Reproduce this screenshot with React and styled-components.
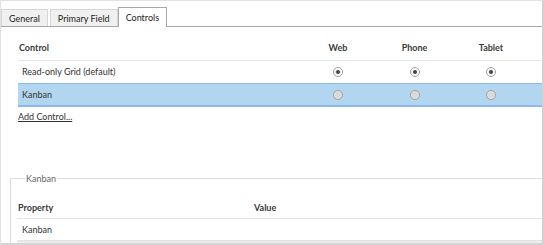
import React from 'react';
import styled, { createGlobalStyle } from 'styled-components';

const GlobalStyle = createGlobalStyle`
  html, body {
    margin: 0;
    padding: 0;
    background: #fff;
  }
  body {
    font-family: Lato, 'Noto Sans', sans-serif;
    font-size: 9px;
    color: #333;
  }
`;

const Frame = styled.div`
  box-sizing: border-box;
  width: 544px;
  height: 245px;
  border-top: 1px solid #e2e2e2;
  border-left: 1px solid #e2e2e2;
  border-right: 2px solid #d2d2d2;
  border-bottom: 2px solid #d4d4d4;
  overflow: hidden;
  display: flex;
  flex-direction: column;
`;

const TabStrip = styled.div`
  box-sizing: border-box;
  display: flex;
  align-items: flex-end;
  height: 26px;
  border-bottom: 1px solid #a8a8a8;
`;

const Tab = styled.div`
  box-sizing: border-box;
  height: ${(p) => (p.$active ? '20px' : '17px')};
  margin-bottom: ${(p) => (p.$active ? '-1px' : '0')};
  padding: 0 7px ${(p) => (p.$active ? 1 : 0)}px;
  display: flex;
  align-items: center;
  background: ${(p) => (p.$active ? '#fff' : '#f0f0f0')};
  border: 1px solid ${(p) => (p.$active ? '#a8a8a8' : '#d6d6d6')};
  border-bottom: 0;
  margin-right: ${(p) => (p.$gap ? 2 : 0)}px;
  color: #222;
`;

const Controls = styled.div`
  padding: 12px 0 0 17px;
`;

const Grid = styled.div`
  display: grid;
  grid-template-columns: 282px 76px 77px 76px 1fr;
`;

const Row = styled.div`
  display: contents;
`;

const HeadCell = styled.div`
  box-sizing: border-box;
  height: 22px;
  padding: 0 0 5px ${(p) => (p.$center ? 0 : 1)}px;
  display: flex;
  align-items: center;
  justify-content: ${(p) => (p.$center ? 'center' : 'flex-start')};
  font-weight: 700;
  color: #3a3a3a;
  border-bottom: 1px solid #e6e6e6;
`;

const Cell = styled.div`
  box-sizing: border-box;
  height: ${(p) => (p.$selected ? 24 : 21)}px;
  margin-top: ${(p) => (p.$selected ? 1 : 0)}px;
  display: flex;
  align-items: center;
  justify-content: ${(p) => (p.$center ? 'center' : 'flex-start')};
  padding-left: ${(p) => (p.$center ? 0 : 4)}px;
  color: #333;
  background: ${(p) => (p.$selected ? '#b2d5f0' : 'transparent')};
  border-top: ${(p) => (p.$selected ? '1px solid #8db6ee' : 'none')};
  border-bottom: ${(p) => (p.$selected ? '2px solid #8db6ee' : 'none')};
`;

const Radio = styled.span`
  box-sizing: border-box;
  width: 10px;
  height: 10px;
  border-radius: 50%;
  border: 1px solid #a0a0a0;
  background: ${(p) => (p.$checked ? '#f4f4f4' : '#d9d9d9')};
  box-shadow: inset 0 0 0 1px ${(p) => (p.$checked ? '#fff' : '#e4e4e4')};
  display: flex;
  align-items: center;
  justify-content: center;
  &::after {
    content: '';
    display: ${(p) => (p.$checked ? 'block' : 'none')};
    width: 4px;
    height: 4px;
    border-radius: 50%;
    background: #444;
  }
`;

const AddLink = styled.a`
  display: inline-block;
  margin-top: 4px;
  color: #333;
  text-decoration: underline;
  text-underline-offset: 1px;
  cursor: pointer;
`;

const Fieldset = styled.fieldset`
  margin: 51px 0 0 9px;
  padding: 13px 0 0 6px;
  border: 1px solid #dedede;
  border-right: none;
  border-bottom: none;
  flex: 1;
  min-height: 0;
`;

const Legend = styled.legend`
  padding: 0 1px;
  margin-left: 8px;
  color: #666;
`;

const PropGrid = styled.div`
  display: grid;
  grid-template-columns: 236px 1fr;
`;

const PropCell = styled.div`
  box-sizing: border-box;
  height: 22px;
  display: flex;
  align-items: center;
  padding-left: ${(p) => (p.$head ? 1 : 5)}px;
  font-weight: ${(p) => (p.$head ? 700 : 400)};
  color: ${(p) => (p.$head ? '#3a3a3a' : '#333')};
  border-bottom: 1px solid #e4e4e4;
`;

const NextRow = styled.div`
  grid-column: 1 / -1;
  height: 3px;
  background: #ededed;
`;

const controls = [
  { name: 'Read-only Grid (default)', checked: true },
  { name: 'Kanban', checked: false, selected: true },
];

export default function App() {
  return (
    <>
      <GlobalStyle />
      <Frame>
        <TabStrip>
          <Tab $gap>General</Tab>
          <Tab>Primary Field</Tab>
          <Tab $active>Controls</Tab>
        </TabStrip>
        <Controls>
          <Grid>
            <Row>
              <HeadCell>Control</HeadCell>
              <HeadCell $center>Web</HeadCell>
              <HeadCell $center>Phone</HeadCell>
              <HeadCell $center>Tablet</HeadCell>
              <HeadCell />
            </Row>
            {controls.map((c) => (
              <Row key={c.name}>
                <Cell $selected={c.selected}>{c.name}</Cell>
                {[0, 1, 2].map((i) => (
                  <Cell key={i} $selected={c.selected} $center>
                    <Radio $checked={c.checked} />
                  </Cell>
                ))}
                <Cell $selected={c.selected} />
              </Row>
            ))}
          </Grid>
          <AddLink>Add Control...</AddLink>
        </Controls>
        <Fieldset>
          <Legend>Kanban</Legend>
          <PropGrid>
            <PropCell $head>Property</PropCell>
            <PropCell $head>Value</PropCell>
            <PropCell>Kanban</PropCell>
            <PropCell />
            <NextRow />
          </PropGrid>
        </Fieldset>
      </Frame>
    </>
  );
}
